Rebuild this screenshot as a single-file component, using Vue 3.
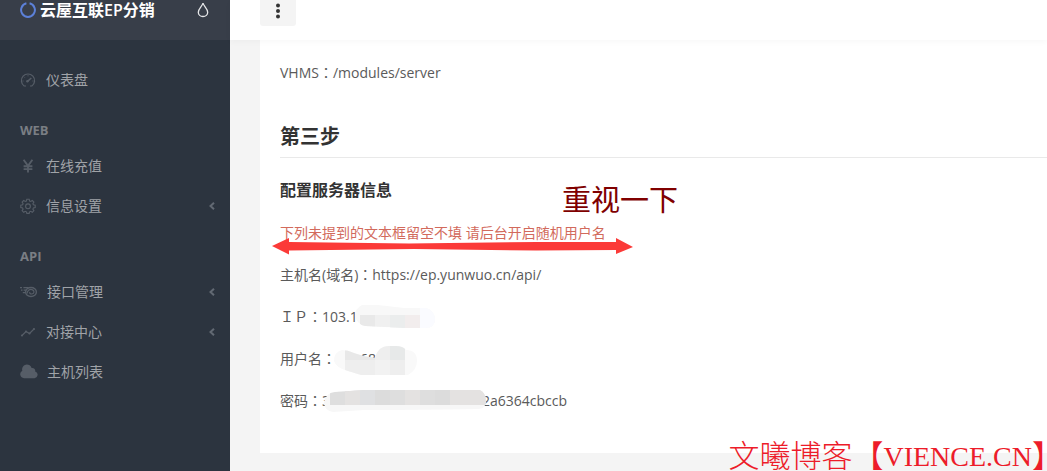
<script setup>
const groups = [
  { title: '', items: [{ icon: 'gauge', label: '仪表盘' }] },
  {
    title: 'WEB',
    items: [
      { icon: 'yen', label: '在线充值' },
      { icon: 'gear', label: '信息设置', more: true }
    ]
  },
  {
    title: 'API',
    items: [
      { icon: 'fireball', label: '接口管理', more: true },
      { icon: 'graph', label: '对接中心', more: true },
      { icon: 'cloud', label: '主机列表' }
    ]
  }
]
</script>

<template>
  <div class="page">
    <aside class="sidebar">
      <div class="brand">
        <a class="brand-link" href="#">
          <svg class="ring" width="16" height="16" viewBox="0 0 16 16" aria-hidden="true">
            <path d="M9.6 1.3A6.9 6.9 0 1 1 6.4 1.3" fill="none" stroke="#5c80d8" stroke-width="2" />
          </svg>
          <span>云屋互联EP分销</span>
        </a>
        <button class="drop" type="button" aria-label="主题颜色">
          <svg width="12" height="16" viewBox="0 0 12 16" aria-hidden="true">
            <path d="M6 1.2C5.3 4 1.3 6.8 1.3 10.2a4.7 4.3 0 0 0 9.4 0C10.7 6.8 6.7 4 6 1.2Z" fill="none" stroke="#e6e7e9" stroke-width="1.3" />
          </svg>
        </button>
      </div>
      <nav class="nav">
        <template v-for="group in groups" :key="group.title">
          <div v-if="group.title" class="nav-heading">{{ group.title }}</div>
          <a v-for="item in group.items" :key="item.label" class="nav-item" href="#">
            <svg v-if="item.icon === 'gauge'" class="icon" width="16" height="16" viewBox="0 0 16 16" aria-hidden="true">
              <path d="M4.2 14A6.6 6.6 0 1 1 11.8 14M3.6 14H6M10 14h2.4" fill="none" stroke="currentColor" stroke-width="1.2" />
              <path d="M2.5 9h1M4 4.8l.7.7M8 3.3v1M12.5 9h1" stroke="currentColor" />
              <path d="M7.3 9.6 11.3 6" stroke="currentColor" stroke-width="1.5" />
              <circle cx="7.4" cy="9.2" r="1.2" fill="currentColor" />
            </svg>
            <svg v-else-if="item.icon === 'yen'" class="icon" width="16" height="16" viewBox="0 0 16 16" aria-hidden="true">
              <path d="M3.6 1.8 8 7.8l4.4-6M8 7.5v7M3.6 8.3h8.8M3.6 11.1h8.8" fill="none" stroke="currentColor" stroke-width="1.9" />
            </svg>
            <svg v-else-if="item.icon === 'gear'" class="icon" width="16" height="16" viewBox="0 0 16 16" aria-hidden="true">
              <path d="M6.8 1.2h2.4l.4 1.8 1.1.5 1.6-1 1.6 1.6-1 1.6.5 1.1 1.8.4v2.4l-1.8.4-.5 1.1 1 1.6-1.6 1.6-1.6-1-1.1.5-.4 1.6H6.8l-.4-1.6-1.1-.5-1.6 1-1.6-1.6 1-1.6-.5-1.1-1.8-.4V7.2l1.8-.4.5-1.1-1-1.6 1.6-1.6 1.6 1 1.1-.5Z" fill="none" stroke="currentColor" stroke-width="1.1" />
              <circle cx="8" cy="8.3" r="2.4" fill="none" stroke="currentColor" stroke-width="1.1" />
            </svg>
            <svg v-else-if="item.icon === 'fireball'" class="icon wide" width="18" height="16" viewBox="0 0 18 16" aria-hidden="true">
              <ellipse cx="11" cy="8" rx="5.4" ry="4.5" fill="none" stroke="currentColor" stroke-width="1.4" />
              <path d="M7.2 9.5C7 6.5 9.6 5 12 5.6c2.8.8 2.6 4-.2 4.4-1.6.1-2.4-.8-2-1.9M0 3.7h2M3.4 3.7h5M1 6.2h1.5M3.600 6.200h2.600M2.800 8.700h2.400" fill="none" stroke="currentColor" stroke-width="1.2" />
            </svg>
            <svg v-else-if="item.icon === 'graph'" class="icon" width="16" height="16" viewBox="0 0 16 16" aria-hidden="true">
              <path d="M2 11.500 6 7.500l3.500 2L14 5" fill="none" stroke="currentColor" stroke-width="1.2" />
              <g fill="currentColor">
                <circle cx="2" cy="11.5" r="1.1" /><circle cx="6" cy="7.5" r="1.1" />
                <circle cx="9.5" cy="9.5" r="1.1" /><circle cx="14" cy="5" r="1.1" />
              </g>
            </svg>
            <svg v-else class="icon wide" width="18" height="16" viewBox="0 0 18 16" aria-hidden="true">
              <path d="M4 14.2A4 4 0 0 1 2.3 6.7 4.8 4.8 0 0 1 11.6 4 2.9 2.9 0 0 1 15.2 7.4 3.5 3.5 0 0 1 14.6 14.2Z" fill="currentColor" />
            </svg>
            <span>{{ item.label }}</span>
            <svg v-if="item.more" class="arrow" width="8" height="10" viewBox="0 0 8 10" aria-hidden="true">
              <path d="M6 1.7 2.5 5 6 8.3" fill="none" stroke="currentColor" stroke-width="2" />
            </svg>
          </a>
        </template>
      </nav>
    </aside>

    <div class="main">
      <header class="topbar">
        <button class="menu" type="button" aria-label="更多">
          <svg width="6" height="16" viewBox="0 0 6 16" fill="#333" aria-hidden="true">
            <circle cx="3" cy="2.5" r="2" /><circle cx="3" cy="8" r="2" /><circle cx="3" cy="13.5" r="2" />
          </svg>
        </button>
      </header>
      <main class="card">
        <p>VHMS<span class="colon">：</span>/modules/server</p>
        <h2>第三步</h2>
        <h3>配置服务器信息</h3>
        <p class="warn">下列未提到的文本框留空不填 请后台开启随机用户名</p>
        <p>主机名(域名)<span class="colon">：</span>https://ep.yunwuo.cn/api/</p>
        <p>ＩＰ<span class="colon">：</span>103.1</p>
        <p>用户名<span class="colon">：</span><span class="user">68</span></p>
        <p>密码<span class="colon">：</span>3<span class="tail">2a6364cbccb</span></p>

        <svg class="marks" width="440" height="400" viewBox="260 40 440 400" aria-hidden="true">
          <path d="M272 246 289 238v4l120 1.5 128-1.5h79v-4l17 9-17 7v-4l-80 .5-122-1.5-125 1.5v4Z" fill="#fb3a38" />
          <clipPath id="m1"><path d="M362 305h16l26 3h22q9 3 9 11 0 9-10 9h-22l-38-2q-9-2-10-11 0-6 7-10Z" /></clipPath>
          <g clip-path="url(#m1)">
            <path fill="#f8f8f8" d="M350 300h90v30h-90z" />
            <path fill="#e9e9e9" d="M360 315h15v12h-15z" /><path fill="#f0f0f0" d="M375 315h15v12h-15z" />
            <path fill="#ebeded" d="M390 315h15v13h-15z" /><path fill="#f2eded" d="M405 315h15v14h-15z" />
            <path fill="#fafbff" d="M420 305h20v26h-20z" />
          </g>
          <clipPath id="m2"><path d="M342 350q6 0 12 3 10 4 21 5 3-12 14-12h7q7 0 10 4 11 0 11 11 0 9-9 14h-47l-13-4q-12-3-14-10 0-9 8-11Z" /></clipPath>
          <g clip-path="url(#m2)">
            <path fill="#f9f9f9" d="M330 344h90v34h-90z" /><path fill="#e8e8e8" d="M345 345h30v15h-30z" />
            <path fill="#eeeeee" d="M345 360h30v17h-30zM375 345h15v15h-15z" />
            <path fill="#e7e9e9" d="M390 345h15v15h-15z" /><path fill="#f2f2f2" d="M375 360h15v16h-15z" />
            <path fill="#eeeeee" d="M390 360h15v16h-15z" />
          </g>
          <clipPath id="m3"><path d="M335 392l30-2h115q6 3 6 11 0 7-7 8-60 1-115 1l-31 2q-8-1-9-9 1-10 11-11Z" /></clipPath>
          <g clip-path="url(#m3)">
            <path fill="#f7f7f7" d="M322 387h170v26H322z" /><path fill="#dedede" d="M330 390h150v15H330z" />
            <path fill="#e4e2e1" d="M345 390h15v15h-15zM405 390h15v15h-15zM450 390h37v15h-37z" />
            <path fill="#dcdcdc" d="M375 390h15v15h-15zM435 390h15v15h-15z" />
            <path fill="#dfe0e2" d="M360 390h15v15h-15z" />
          </g>
        </svg>
        <strong class="callout">重视一下</strong>
      </main>
    </div>
    <div class="watermark">文曦博客【<span class="site">VIENCE.CN</span>】</div>
  </div>
</template>

<style>
body {
  margin: 0;
  background: #f4f4f4;
}
</style>

<style scoped>
.page {
  position: relative;
  display: flex;
  min-height: 100vh;
  overflow: hidden;
  background: #f4f4f4;
  color: #5a5a5a;
  font: 14px/22px "Open Sans", "Noto Sans CJK SC", sans-serif;
}
.sidebar {
  flex: 0 0 230px;
  background: #2c343f;
}
.brand {
  display: flex;
  justify-content: space-between;
  align-items: flex-start;
  box-sizing: border-box;
  height: 40px;
  padding: 0 21px 0 20px;
  background: #383e49;
}
.brand-link {
  display: flex;
  align-items: center;
  gap: 4px;
  color: #fff;
  font-size: 16px;
  font-weight: 600;
  line-height: 20px;
  text-decoration: none;
}
.drop {
  display: flex;
  align-items: center;
  height: 20px;
  padding: 0;
  border: 0;
  background: none;
}
.nav {
  padding: 20px 0;
}
.nav-heading {
  padding: 21px 20px 7px;
  color: #7a7e84;
  font-size: 13px;
  font-weight: 700;
  line-height: 18px;
}
.nav-item {
  display: flex;
  align-items: center;
  height: 40px;
  padding: 0 14px 0 20px;
  color: #a0a3a8;
  text-decoration: none;
}
.icon {
  margin-right: 10px;
  color: #565d67;
}
.wide {
  margin-right: 9px;
}
.arrow {
  margin-left: auto;
  color: #626973;
}
.main {
  display: flex;
  flex: 1;
  flex-direction: column;
  min-width: 0;
}
.topbar {
  position: relative;
  z-index: 1;
  height: 40px;
  padding-left: 30px;
  background: #fff;
  box-shadow: 0 2px 6px rgba(0, 0, 0, 0.03);
}
.menu {
  display: flex;
  justify-content: center;
  width: 36px;
  height: 26px;
  padding: 3px 0 0;
  border: 0;
  border-radius: 0 0 3px 3px;
  background: #f4f4f4;
}
.card {
  position: relative;
  margin: 0 0 18px 30px;
  padding: 22px 0 21px 20px;
  background: #fff;
}
p {
  margin: 0 0 20px;
  white-space: nowrap;
}
h2 {
  margin: 40px 0 20px;
  padding-bottom: 7px;
  border-bottom: 1px solid #e9e9e9;
  color: #333;
  font-size: 20px;
  font-weight: 600;
  line-height: 26px;
}
h3 {
  margin: 0 0 20px;
  color: #333;
  font-size: 16px;
  font-weight: 600;
  line-height: 24px;
}
.warn {
  color: #d26a5c;
}
.colon {
  font-family: "Noto Sans CJK TC", sans-serif;
  line-height: 1;
}
.user {
  margin-left: 24px;
}
.tail {
  margin-left: 152px;
}
.marks {
  position: absolute;
  top: 0;
  left: 0;
}
.callout {
  position: absolute;
  top: 140px;
  left: 302px;
  color: #800000;
  font-size: 29px;
  font-weight: 400;
  line-height: 40px;
}
.watermark {
  position: absolute;
  right: -16px;
  bottom: 0;
  color: #ed1c2a;
  font: 31px/32px "Noto Sans CJK SC", sans-serif;
  font-weight: 300;
  white-space: nowrap;
}
.site {
  font-family: "Liberation Serif", serif;
  font-size: 28px;
  line-height: 1;
  vertical-align: 1px;
}
</style>
